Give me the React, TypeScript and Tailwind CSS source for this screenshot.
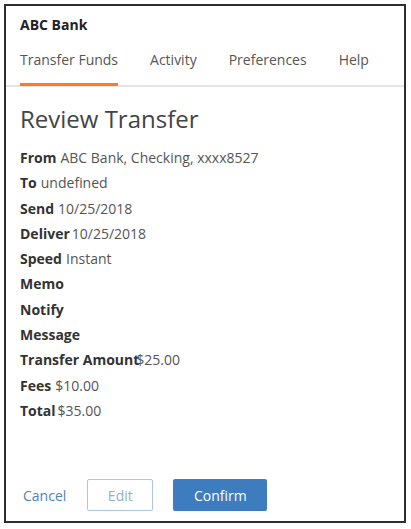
import React from 'react';

const rows: { label: string; value?: string; gap?: string }[] = [
  { label: 'From', value: 'ABC Bank, Checking, xxxx8527' },
  { label: 'To', value: 'undefined' },
  { label: 'Send', value: '10/25/2018' },
  { label: 'Deliver', value: '10/25/2018', gap: 'ml-[2px]' },
  { label: 'Speed', value: 'Instant' },
  { label: 'Memo' },
  { label: 'Notify' },
  { label: 'Message' },
  { label: 'Transfer Amount', value: '$25.00', gap: '-ml-[3px]' },
  { label: 'Fees', value: '$10.00' },
  { label: 'Total', value: '$35.00', gap: 'ml-[2px]' },
];

const tabs = ['Transfer Funds', 'Activity', 'Preferences', 'Help'];

export default function App() {
  return (
    <div className="w-[411px] h-[529px] bg-white pt-[4px] pl-[4px]" style={{ fontFamily: '"Open Sans", sans-serif' }}>
      <div className="w-[402px] h-[519px] border-2 border-[#2e2e2e] flex flex-col">
        {/* header */}
        <div className="px-[14px] pt-[9px] text-[14px] leading-[20px] font-bold text-[#222]">ABC Bank</div>
        <div className="mt-[15px] border-b-2 border-[#e4e4e4] px-[14px] flex gap-8">
          {tabs.map((t, i) => (
            <div
              key={t}
              className={
                'text-[14px] leading-[20px] pb-[13px] text-[#555] -mb-[1px] border-b-[3px] ' +
                (i === 0 ? 'border-[#ff7a26]' : 'border-transparent')
              }
            >
              {t}
            </div>
          ))}
        </div>

        {/* body */}
        <div className="px-[14px] pt-[16px]">
          <h1 className="text-[24px] leading-[32px] text-[#444]">Review Transfer</h1>
          <div className="mt-[10px] flex flex-col">
            {rows.map((r) => (
              <div key={r.label} className="text-[14px] leading-[25.3px] text-[#555] whitespace-nowrap">
                <span className="font-bold text-[#333]">{r.label}</span>
                {r.value && <span className={r.gap ?? 'ml-[4px]'}>{r.value}</span>}
              </div>
            ))}
          </div>
        </div>

        {/* actions */}
        <div className="mt-auto px-[17px] pb-[10px] flex items-center">
          <button className="text-[14px] text-[#4f82bb] mr-[21px]">Cancel</button>
          <button className="w-[66px] h-[32px] border border-[#a9c6e4] rounded-[2px] text-[14px] text-[#8fb0d3] mr-[20px]">
            Edit
          </button>
          <button className="w-[94px] h-[32px] bg-[#3d7dbf] rounded-[2px] text-[14px] text-white">Confirm</button>
        </div>
      </div>
    </div>
  );
}
